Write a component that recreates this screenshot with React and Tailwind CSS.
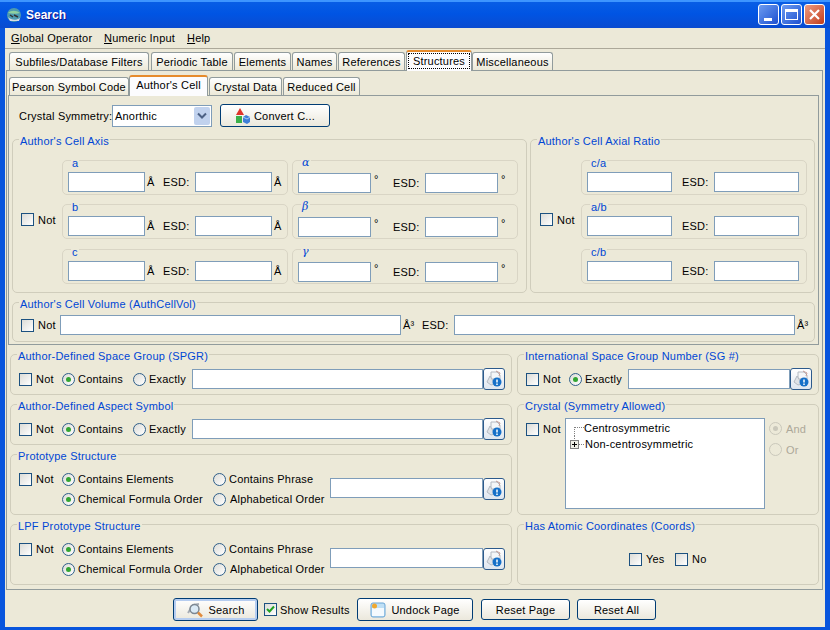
import React from "react";

const Check = ({ checked, className = "" }) => (
  <span className={`flex h-[13px] w-[13px] shrink-0 items-center justify-center border border-[#1c5180] bg-gradient-to-br from-[#dcdcd7] to-white ${className}`}>
    {checked && (
      <svg width="9" height="9" viewBox="0 0 9 9">
        <path d="M1 4l2.5 2.5L8 1.5" fill="none" stroke="#21a121" strokeWidth="2" />
      </svg>
    )}
  </span>
);

const Radio = ({ on, disabled }) => (
  <span
    className={`flex h-[13px] w-[13px] shrink-0 items-center justify-center rounded-full border ${
      disabled ? "border-[#cac8bb] bg-[#ece9d8]" : "border-[#2f5f8a] bg-gradient-to-br from-[#dcdcd7] to-white"
    }`}
  >
    {on && <span className={`h-[5px] w-[5px] rounded-full ${disabled ? "bg-[#cac8bb]" : "bg-[#32a532]"}`} />}
  </span>
);

const RadioLabel = ({ on, label, className = "" }) => (
  <span className={`flex items-center gap-[3px] ${className}`}>
    <Radio on={on} />
    <span>{label}</span>
  </span>
);

const Field = ({ className = "" }) => <span className={`block shrink-0 border border-[#7f9db9] bg-white ${className}`} />;

const NotBox = ({ className = "" }) => (
  <span className={`flex shrink-0 items-center gap-[4px] ${className}`}>
    <Check />
    <span>Not</span>
  </span>
);

const Group = ({ title, className = "", children, small, greek }) => (
  <div className={`relative shrink-0 rounded-[5px] border ${small ? "border-[#d9d5c5]" : "border-[#d0cdbc]"} ${className}`}>
    <span
      className={`absolute whitespace-nowrap bg-[#ece9d8] px-[1px] leading-[14px] text-[#0046d5] ${
        small ? "left-[8px] -top-[5px]" : "left-[6px] -top-[6px]"
      } ${greek ? "[font-family:'DejaVu_Serif',serif] italic" : ""}`}
    >
      {title}
    </span>
    {children}
  </div>
);

const InfoIcon = () => (
  <svg width="18" height="18" viewBox="0 0 18 18">
    <path d="M6 2h6l3 3v4H6z" fill="#f4f6f8" stroke="#b4bac2" />
    <path d="M5 6l-3 6 4 3 4-1z" fill="#dfe2e6" stroke="#b4bac2" />
    <path d="M11 1l4 2-1 3" fill="none" stroke="#c09a94" />
    <circle cx="12" cy="12" r="4.5" fill="#1670c8" />
    <rect x="11.25" y="9.5" width="1.5" height="3" fill="#fff" />
    <rect x="11.25" y="13.5" width="1.5" height="1.5" fill="#fff" />
  </svg>
);

const InfoButton = () => (
  <span className="flex h-[22px] w-[22px] shrink-0 items-center justify-center rounded-[3px] border border-[#2c5a8c] bg-gradient-to-b from-white to-[#dfe6ef]">
    <InfoIcon />
  </span>
);

const Button = ({ className = "", children }) => (
  <span className={`flex shrink-0 items-center justify-center rounded-[3px] border border-[#003c74] bg-gradient-to-b from-white to-[#ebe8dc] ${className}`}>
    {children}
  </span>
);

const Tab = ({ className = "", label }) => (
  <span className={`flex h-[18px] shrink-0 items-center justify-center rounded-t-[3px] border border-b-0 border-[#919b9c] bg-gradient-to-b from-white to-[#ece9d8] pt-[1px] whitespace-nowrap ${className}`}>
    {label}
  </span>
);

const ActiveTab = ({ className = "", label, focus }) => (
  <span className={`relative z-10 -mb-px flex h-[21px] shrink-0 flex-col rounded-t-[3px] border-x border-[#919b9c] border-t-2 border-t-[#e68b2c] bg-[#fcfcfe] whitespace-nowrap ${className}`}>
    <span className={`flex h-[16px] items-center justify-center ${focus ? "mx-[1px] mt-[1px] border border-dotted border-black" : ""}`}>{label}</span>
  </span>
);

const AxisRow = ({ title, greek, className = "", unit, inputW, unitCls, tailCls }) => (
  <Group small title={title} greek={greek} className={`h-[35px] w-[226px] ${className}`}>
    <div className="flex items-center pl-[5px] pt-[11px]">
      <Field className={`h-[20px] ${inputW}`} />
      <span className={`shrink-0 ${unitCls}`}>{unit}</span>
      <span className="w-[32px] shrink-0">ESD:</span>
      <Field className={`h-[20px] ${inputW}`} />
      <span className={tailCls}>{unit}</span>
    </div>
  </Group>
);

const PrototypeGroup = ({ title, className = "" }) => (
  <Group title={title} className={`h-[61px] ${className}`}>
    <div className="flex items-start pl-[8px] pt-[14px]">
      <NotBox className="h-[20px] w-[43px]" />
      <div className="grid w-[268px] shrink-0 grid-cols-[151px_117px] auto-rows-[20px] items-center">
        <RadioLabel on label="Contains Elements" />
        <RadioLabel label="Contains Phrase" />
        <RadioLabel on label="Chemical Formula Order" />
        <span className="flex items-center gap-[4px]">
          <Radio />
          <span>Alphabetical Order</span>
        </span>
      </div>
      <div className="mt-[9px] flex items-start">
        <Field className="h-[20px] w-[153px]" />
        <InfoButton />
      </div>
    </div>
  </Group>
);

const LineGroup = ({ title, className = "", fieldW, exactOnly }) => (
  <Group title={title} className={`h-[41px] ${className}`}>
    <div className="flex items-center pl-[8px] pt-[13px]">
      <NotBox className="w-[43px]" />
      {!exactOnly && <RadioLabel on label="Contains" className="w-[71px] shrink-0" />}
      <RadioLabel on={exactOnly} label="Exactly" className="w-[59px] shrink-0" />
      <Field className={`h-[20px] ${fieldW}`} />
      <InfoButton />
    </div>
  </Group>
);

export default function App() {
  return (
    <div className="flex h-[630px] w-[830px] flex-col overflow-hidden bg-[#0855dd] text-[11px] leading-[14px] tracking-[0.2px] text-black [font-family:'Liberation_Sans',sans-serif]">
      {/* title bar */}
      <div className="flex h-[28px] shrink-0 items-center bg-gradient-to-b from-[#0a5fe6] via-[#0054e3] to-[#0a4bd0] shadow-[inset_0_2px_0_#3d95ff]">
        <svg className="ml-[6px] mt-[1px]" width="16" height="16" viewBox="0 0 16 16">
          <circle cx="8" cy="8" r="7" fill="#4d9ab0" />
          <path d="M2 6c3-3 8-3 12 0-3 1-8 1-12 0z" fill="#8fd0a0" />
          <path d="M2 10c3 3 8 4 12 1l-1 3H4z" fill="#d8dde2" />
          <path d="M4 8l3 2M8 8l4 2" stroke="#333" strokeWidth="1.5" />
        </svg>
        <span className="ml-[4px] mt-[2px] text-[12px] font-bold tracking-normal text-white [text-shadow:1px_1px_#0f1089]">Search</span>
        <div className="ml-auto mr-[5px] flex gap-[2px]">
          <span className="flex h-[21px] w-[21px] items-end rounded-[3px] border border-white bg-gradient-to-br from-[#6d9bf0] to-[#1f4fd0] pb-[3px] pl-[5px]">
            <span className="h-[3px] w-[8px] bg-white" />
          </span>
          <span className="flex h-[21px] w-[21px] items-center justify-center rounded-[3px] border border-white bg-gradient-to-br from-[#6d9bf0] to-[#1f4fd0]">
            <span className="h-[11px] w-[13px] border border-t-[3px] border-white" />
          </span>
          <span className="flex h-[21px] w-[21px] items-center justify-center rounded-[3px] border border-white bg-gradient-to-br from-[#ec9a80] to-[#c23a14]">
            <svg width="13" height="13" viewBox="0 0 13 13">
              <path d="M2 2l9 9M11 2l-9 9" stroke="#fff" strokeWidth="2.2" />
            </svg>
          </span>
        </div>
      </div>

      {/* client area */}
      <div className="ml-[5px] h-[599px] w-[820px] shrink-0 bg-[#ece9d8]">
        {/* menu */}
        <div className="flex h-[21px] items-center border-b border-[#aca899] pl-[6px]">
          <span className="w-[93px]"><u>G</u>lobal Operator</span>
          <span className="w-[83px]"><u>N</u>umeric Input</span>
          <span><u>H</u>elp</span>
        </div>

        {/* top tabs */}
        <div className="flex h-[21px] items-end pl-[4px]">
          <Tab className="w-[140px]" label="Subfiles/Database Filters" />
          <Tab className="ml-[2px] w-[82px]" label="Periodic Table" />
          <Tab className="ml-[1px] w-[57px]" label="Elements" />
          <Tab className="ml-[1px] w-[45px]" label="Names" />
          <Tab className="ml-[1px] w-[67px]" label="References" />
          <ActiveTab className="ml-[1px] w-[66px]" label="Structures" focus />
          <Tab className="w-[81px]" label="Miscellaneous" />
        </div>

        {/* outer panel */}
        <div className="ml-[1px] h-[520px] w-[817px] border border-[#919b9c] pl-[1px] pt-[5px]">
          <div className="flex h-[19px] items-end pl-[1px]">
            <Tab className="w-[120px]" label="Pearson Symbol Code" />
            <ActiveTab className="w-[79px]" label="Author's Cell" />
            <Tab className="ml-[1px] w-[73px]" label="Crystal Data" />
            <Tab className="ml-[1px] w-[77px]" label="Reduced Cell" />
          </div>

          {/* inner panel */}
          <div className="h-[250px] w-[811px] border border-[#919b9c]">
            <div className="mt-[8px] flex h-[23px] items-center pl-[10px]">
              <span className="w-[93px] shrink-0 whitespace-nowrap">Crystal Symmetry:</span>
              <span className="flex h-[22px] w-[100px] shrink-0 items-center border border-[#7f9db9] bg-white pl-[2px]">
                Anorthic
                <span className="ml-auto mr-[1px] flex h-[18px] w-[16px] items-center justify-center rounded-[2px] bg-[#c1d2ee]">
                  <svg width="10" height="8" viewBox="0 0 10 8">
                    <path d="M1 1.5l4 4 4-4" fill="none" stroke="#4d6185" strokeWidth="2" />
                  </svg>
                </span>
              </span>
              <Button className="ml-[8px] h-[23px] w-[110px] gap-[3px]">
                <svg width="16" height="16" viewBox="0 0 16 16">
                  <path d="M5 0l4 7H1z" fill="#e0342a" />
                  <rect x="1" y="8" width="6" height="7" fill="#3cb04a" />
                  <path d="M8 9l3-2 4 2v5l-3 2-4-2z" fill="#3f7fd8" />
                  <path d="M8 9l4 2 3-2" fill="none" stroke="#a9ccf5" />
                </svg>
                Convert C...
              </Button>
            </div>

            <div className="mt-[12px] flex gap-[3px] pl-[3px]">
              <Group title="Author's Cell Axis" className="h-[154px] w-[515px]">
                <div className="flex pl-[8px] pt-[20px]">
                  <NotBox className="w-[41px] pb-[5px]" />
                  <div className="flex flex-col">
                    <AxisRow title="a" unit="Å" inputW="w-[77px]" unitCls="ml-[2px] w-[16px]" tailCls="ml-[2px]" />
                    <AxisRow title="b" unit="Å" inputW="w-[77px]" unitCls="ml-[2px] w-[16px]" tailCls="ml-[2px]" className="mt-[9px]" />
                    <AxisRow title="c" unit="Å" inputW="w-[77px]" unitCls="ml-[2px] w-[16px]" tailCls="ml-[2px]" className="mt-[10px]" />
                  </div>
                  <div className="ml-[4px] flex flex-col">
                    <AxisRow greek title="α" unit="°" inputW="w-[73px]" unitCls="mb-[8px] ml-[3px] w-[19px]" tailCls="mb-[8px] ml-[3px]" />
                    <AxisRow greek title="β" unit="°" inputW="w-[73px]" unitCls="mb-[8px] ml-[3px] w-[19px]" tailCls="mb-[8px] ml-[3px]" className="mt-[9px]" />
                    <AxisRow greek title="γ" unit="°" inputW="w-[73px]" unitCls="mb-[8px] ml-[3px] w-[19px]" tailCls="mb-[8px] ml-[3px]" className="mt-[10px]" />
                  </div>
                </div>
              </Group>
              <Group title="Author's Cell Axial Ratio" className="h-[154px] w-[285px]">
                <div className="flex pl-[9px] pt-[20px]">
                  <NotBox className="w-[41px] pb-[5px]" />
                  <div className="flex flex-col">
                    {["c/a", "a/b", "c/b"].map((t, i) => (
                      <Group small key={t} title={t} className={`h-[35px] w-[226px] ${i === 1 ? "mt-[9px]" : i === 2 ? "mt-[10px]" : ""}`}>
                        <div className="flex items-center pl-[5px] pt-[11px]">
                          <Field className="h-[20px] w-[85px]" />
                          <span className="ml-[10px] w-[32px] shrink-0">ESD:</span>
                          <Field className="h-[20px] w-[85px]" />
                        </div>
                      </Group>
                    ))}
                  </div>
                </div>
              </Group>
            </div>

            <Group title="Author's Cell Volume (AuthCellVol)" className="ml-[3px] mt-[9px] h-[40px] w-[803px]">
              <div className="flex items-center pl-[8px] pt-[12px]">
                <NotBox className="w-[39px]" />
                <Field className="h-[20px] w-[341px]" />
                <span className="ml-[2px] w-[19px] shrink-0">Å³</span>
                <span className="w-[32px] shrink-0">ESD:</span>
                <Field className="h-[20px] w-[341px]" />
                <span className="ml-[2px]">Å³</span>
              </div>
            </Group>
          </div>

          {/* lower groups */}
          <div className="ml-[2px] mt-[9px] flex gap-[5px]">
            <div className="flex w-[502px] shrink-0 flex-col gap-[9px]">
              <LineGroup title="Author-Defined Space Group (SPGR)" fieldW="w-[291px]" />
              <LineGroup title="Author-Defined Aspect Symbol" fieldW="w-[291px]" />
              <PrototypeGroup title="Prototype Structure" />
              <PrototypeGroup title="LPF Prototype Structure" />
            </div>
            <div className="flex w-[302px] shrink-0 flex-col gap-[9px]">
              <LineGroup title="International Space Group Number (SG #)" fieldW="w-[162px]" exactOnly />
              <Group title="Crystal (Symmetry Allowed)" className="h-[111px]">
                <div className="flex items-start pl-[8px] pt-[13px]">
                  <NotBox className="w-[39px] pt-[4px]" />
                  <div className="h-[91px] w-[200px] shrink-0 border border-[#7f9db9] bg-white pt-[1px]">
                    <div className="flex h-[16px] items-center">
                      <svg width="18" height="16" viewBox="0 0 18 16" className="shrink-0">
                        <path d="M8.5 7v9M9 7.5h9" stroke="#808080" strokeDasharray="1 1" fill="none" />
                      </svg>
                      <span>Centrosymmetric</span>
                    </div>
                    <div className="flex h-[16px] items-center">
                      <svg width="19" height="16" viewBox="0 0 19 16" className="shrink-0">
                        <path d="M8.5 0v4M13 8.5h6" stroke="#808080" strokeDasharray="1 1" fill="none" />
                        <rect x="4.5" y="4.5" width="8" height="8" fill="#eeeee6" stroke="#808080" />
                        <path d="M6 8.5h5M8.5 6v5" stroke="#000" />
                      </svg>
                      <span>Non-centrosymmetric</span>
                    </div>
                  </div>
                  <div className="ml-[4px] flex flex-col text-[#aca899]">
                    <span className="flex h-[21px] items-center gap-[4px]"><Radio on disabled />And</span>
                    <span className="flex h-[21px] items-center gap-[4px]"><Radio disabled />Or</span>
                  </div>
                </div>
              </Group>
              <Group title="Has Atomic Coordinates (Coords)" className="h-[61px]">
                <div className="flex items-center pl-[111px] pt-[27px]">
                  <span className="flex w-[46px] items-center gap-[4px]"><Check />Yes</span>
                  <span className="flex items-center gap-[4px]"><Check />No</span>
                </div>
              </Group>
            </div>
          </div>
        </div>

        {/* bottom bar */}
        <div className="flex items-center pl-[168px] pt-[8px]">
          <Button className="h-[23px] w-[85px] gap-[4px] shadow-[inset_0_0_0_2px_#b6cdf0]">
            <svg width="18" height="18" viewBox="0 0 18 18">
              <path d="M2 12l5-8 6-1" fill="none" stroke="#a7adb5" strokeWidth="2" />
              <circle cx="8.5" cy="8" r="4.5" fill="#dbeaf5" stroke="#7c8792" strokeWidth="1.5" />
              <path d="M12 11.5l4 4" stroke="#e08a3c" strokeWidth="2.5" />
            </svg>
            Search
          </Button>
          <span className="ml-[6px] flex w-[93px] shrink-0 items-center gap-[3px]">
            <Check checked />
            Show Results
          </span>
          <Button className="h-[23px] w-[116px] gap-[5px]">
            <svg width="16" height="16" viewBox="0 0 16 16">
              <rect x="1" y="1" width="14" height="14" rx="2" fill="#bfe0f6" stroke="#6aa6d6" />
              <rect x="2" y="6" width="12" height="8" fill="#f4fafe" />
              <circle cx="4.5" cy="4" r="2.5" fill="#f0a830" />
            </svg>
            Undock Page
          </Button>
          <Button className="ml-[8px] h-[21px] w-[89px]">Reset Page</Button>
          <Button className="ml-[7px] h-[21px] w-[79px]">Reset All</Button>
        </div>
      </div>
    </div>
  );
}
